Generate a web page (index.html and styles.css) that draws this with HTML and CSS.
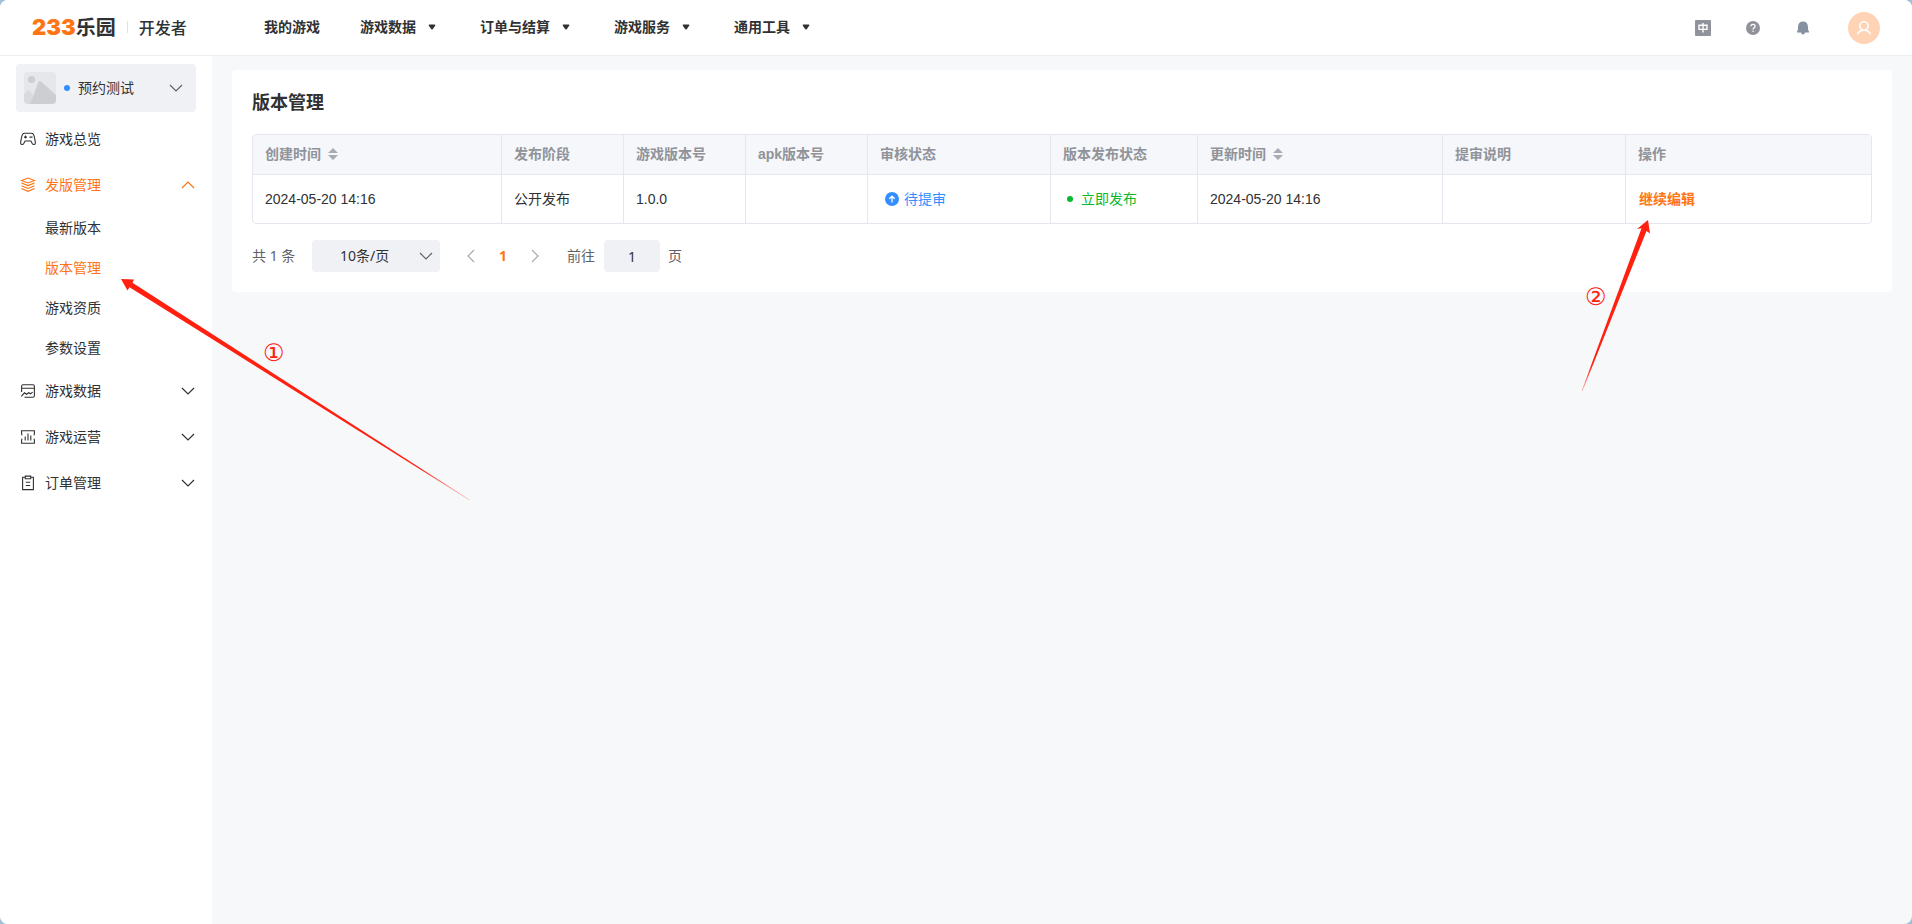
FILE: index.html
```html
<!DOCTYPE html>
<html lang="zh-CN">
<head>
<meta charset="utf-8">
<meta name="viewport" content="width=device-width, initial-scale=1">
<title>版本管理 - 233乐园开发者</title>
<link rel="stylesheet" href="styles.css">
</head>
<body>
<svg class="defs" width="0" height="0" aria-hidden="true">
  <symbol id="chevron-down" viewBox="0 0 14 14"><path d="M1 4l6 6 6-6" fill="none" stroke="currentColor" stroke-width="1.2"/></symbol>
  <symbol id="caret" viewBox="0 0 8 6"><path d="M1.6 0.6h4.8q1.4 0 .8 1.2L4.8 5q-.8 1-1.6 0L.8 1.8Q.2.6 1.6.6z" fill="currentColor"/></symbol>
  <symbol id="sort" viewBox="0 0 10 12"><path d="M5 0l5 5H0zM0 7h10l-5 5z" fill="currentColor"/></symbol>
</svg>
<div class="app">
  <header class="topbar">
    <a class="brand" href="#">
      <span class="brand-num">233</span><span class="brand-name">乐园</span>
      <span class="brand-line"></span>
      <span class="brand-sub">开发者</span>
    </a>
    <nav class="topnav">
      <a class="nav-item" href="#">我的游戏</a>
      <button class="nav-item" type="button">游戏数据<svg class="caret"><use href="#caret"/></svg></button>
      <button class="nav-item" type="button">订单与结算<svg class="caret"><use href="#caret"/></svg></button>
      <button class="nav-item" type="button">游戏服务<svg class="caret"><use href="#caret"/></svg></button>
      <button class="nav-item" type="button">通用工具<svg class="caret"><use href="#caret"/></svg></button>
    </nav>
    <div class="tools">
      <button class="tool" type="button" aria-label="语言">
        <svg width="16" height="16" viewBox="0 0 16 16"><rect width="16" height="16" rx="1" fill="#909399"/><path d="M4 5.2h8v4.2H4zM8 3v9.6" fill="none" stroke="#fff" stroke-width="1.4"/></svg>
      </button>
      <button class="tool" type="button" aria-label="帮助">
        <svg width="16" height="16" viewBox="0 0 16 16"><circle cx="8" cy="8" r="7" fill="#909399"/><path d="M5.9 6.3c0-2.7 4.2-2.6 4.2-.1 0 1.5-2 1.6-2 3.2" fill="none" stroke="#fff" stroke-width="1.3"/><circle cx="8.1" cy="11.3" r=".8" fill="#fff"/></svg>
      </button>
      <button class="tool" type="button" aria-label="通知">
        <svg width="16" height="16" viewBox="0 0 16 16"><path d="M8 1.6c3 0 4.7 2 4.9 4.6l.3 4 .8 1.2v1H10c-.2 1.3-1 2-2 2s-1.800-.7-2-2H2v-1l.8-1.200.3-4C3.300 3.600 5 1.600 8 1.600z" fill="#8590a0"/></svg>
      </button>
      <button class="avatar" type="button" aria-label="账户">
        <svg width="16" height="16" viewBox="0 0 16 16" fill="none" stroke="#fff" stroke-width="1.500"><circle cx="8" cy="6" r="4.200"/><path d="M1.700 14.300C2.600 11.600 5 10.200 8 10.200s5.400 1.400 6.300 4.100"/></svg>
      </button>
    </div>
  </header>

  <div class="body">
    <aside class="sidebar">
      <button class="game" type="button">
        <svg class="thumb" viewBox="0 0 32 32"><rect width="32" height="32" rx="4" fill="#e6e7eb"/><circle cx="7.500" cy="7.500" r="3.600" fill="#cdced2"/><path d="M0 23l3-4q1.500-2 3 0l3 4-2.500 9H4q-4 0-4-4z" fill="#d9dade"/><path d="M6 32l8.300-21.500q1-2.500 3-.8L32 23v5q0 4-4 4z" fill="#cdced2"/></svg>
        <span class="dot dot-blue"></span>
        <span class="game-name">预约测试</span>
        <svg class="chev"><use href="#chevron-down"/></svg>
      </button>
      <nav class="menu">
        <a class="menu-item" href="#">
          <svg class="mi" viewBox="0 0 16 16"><path d="M4.600 2.200h6.800c2 0 2.600 1.600 3 4l.9 4.600c.5 3-2 3.500-3.200 1.500L10.900 10H5.100l-1.200 2.300C2.700 14.300.2 13.800.7 10.800l.9-4.600c.4-2.400 1-4 3-4zM5.500 4.600v3M4 6.100h3M9.500 6.100h3"/></svg>
          <span>游戏总览</span>
        </a>
        <button class="menu-item active" type="button" aria-expanded="true">
          <svg class="mi" viewBox="0 0 16 16"><path d="M8 1l6.500 2.500L8 6 1.500 3.500zM1.500 6L8 8.600 14.500 6M1.500 8.800L8 11.400l6.500-2.600M1.500 11.600L8 14.300l6.500-2.700"/></svg>
          <span>发版管理</span>
          <svg class="chev up"><use href="#chevron-down"/></svg>
        </button>
        <a class="sub-item" href="#">最新版本</a>
        <a class="sub-item active" href="#" aria-current="page">版本管理</a>
        <a class="sub-item" href="#">游戏资质</a>
        <a class="sub-item" href="#">参数设置</a>
        <button class="menu-item" type="button">
          <svg class="mi" viewBox="0 0 16 16"><path d="M1.600 9V3.200q0-1.500 1.500-1.500h9.800q1.500 0 1.500 1.500v9.600q0 1.500-1.500 1.500H4.500M1.600 5.300h12.800M1.300 13.300L4.500 9.800l2 1.500 2.300-1.600 1.700 1.100 2.200-1.700"/></svg>
          <span>游戏数据</span>
          <svg class="chev"><use href="#chevron-down"/></svg>
        </button>
        <button class="menu-item" type="button">
          <svg class="mi" viewBox="0 0 16 16"><path d="M1.600 5V1.700h12.800V5M1.600 11v3.300h12.800V11M1 5.700h1.500M13.500 5.700H15M1 10.300h1.500M13.500 10.300H15M5.200 7.500v4M8 4.500v7M10.800 6.500v5"/></svg>
          <span>游戏运营</span>
          <svg class="chev"><use href="#chevron-down"/></svg>
        </button>
        <button class="menu-item" type="button">
          <svg class="mi" viewBox="0 0 16 16"><path d="M5.300 2.300H2.600v12.300h10.800V2.300h-2.700M5.300 1.100h5.400v2.600H5.300zM5.800 7.200h4.400M5.800 10.500h4.400"/></svg>
          <span>订单管理</span>
          <svg class="chev"><use href="#chevron-down"/></svg>
        </button>
      </nav>
    </aside>

    <main class="content">
      <section class="card">
        <h1 class="title">版本管理</h1>
        <div class="table-wrap">
          <table class="table">
            <colgroup>
              <col class="w-time-first"><col class="w-short"><col class="w-short"><col class="w-short"><col class="w-mid"><col class="w-release"><col class="w-time"><col class="w-mid"><col class="w-time">
            </colgroup>
            <thead>
              <tr>
                <th scope="col"><span class="sortable">创建时间<svg class="sort"><use href="#sort"/></svg></span></th>
                <th scope="col">发布阶段</th>
                <th scope="col">游戏版本号</th>
                <th scope="col">apk版本号</th>
                <th scope="col">审核状态</th>
                <th scope="col">版本发布状态</th>
                <th scope="col"><span class="sortable">更新时间<svg class="sort"><use href="#sort"/></svg></span></th>
                <th scope="col">提审说明</th>
                <th scope="col">操作</th>
              </tr>
            </thead>
            <tbody>
              <tr>
                <td>2024-05-20 14:16</td>
                <td>公开发布</td>
                <td>1.0.0</td>
                <td></td>
                <td><span class="status pending"><svg width="14" height="14" viewBox="0 0 14 14"><circle cx="7" cy="7" r="7" fill="currentColor"/><path d="M7 10.500V4.500M4.300 6.800L7 4.200l2.700 2.600" fill="none" stroke="#fff" stroke-width="1.300"/></svg>待提审</span></td>
                <td><span class="status live"><span class="dot dot-green"></span>立即发布</span></td>
                <td>2024-05-20 14:16</td>
                <td></td>
                <td><a class="edit" href="#">继续编辑</a></td>
              </tr>
            </tbody>
          </table>
        </div>
        <div class="pager">
          <span class="total">共 1 条</span>
          <span class="size">
            <select aria-label="每页条数"><option>10条/页</option><option>20条/页</option></select>
            <svg class="chev"><use href="#chevron-down"/></svg>
          </span>
          <button class="page-btn prev" type="button" aria-label="上一页"><svg class="chev left"><use href="#chevron-down"/></svg></button>
          <button class="page-btn current" type="button">1</button>
          <button class="page-btn next" type="button" aria-label="下一页"><svg class="chev right"><use href="#chevron-down"/></svg></button>
          <label class="jump">前往<input type="text" value="1"><span>页</span></label>
        </div>
      </section>
    </main>
  </div>

  <div class="note note-1">
    <svg width="360" height="230" viewBox="0 0 360 230">
      <defs><linearGradient id="fade1" gradientUnits="userSpaceOnUse" x1="1" y1="5" x2="350" y2="227"><stop offset=".85" stop-color="#ff2010"/><stop offset="1" stop-color="#ff2010" stop-opacity=".3"/></linearGradient></defs>
      <path d="M1 5L14 5.500 12.500 8.800 350 226 349 226 9.500 13.300 7.500 16.500z" fill="url(#fade1)"/>
    </svg>
    <span class="num">①</span>
  </div>
  <div class="note note-2">
    <svg width="80" height="180" viewBox="0 0 80 180">
      <defs><linearGradient id="fade2" gradientUnits="userSpaceOnUse" x1="68" y1="0" x2="2" y2="171"><stop offset=".85" stop-color="#ff2010"/><stop offset="1" stop-color="#ff2010" stop-opacity=".3"/></linearGradient></defs>
      <path d="M68 0L70 13.500 66.500 11 2.500 171 1.600 171 61.500 8.300 57 9z" fill="url(#fade2)"/>
    </svg>
    <span class="num">②</span>
  </div>
</div>
</body>
</html>
```

FILE: styles.css
```css
* { box-sizing: border-box; }

html { background: #9fc0d6; }

body {
  margin: 0;
  color: #303133;
  font: 14px/20px "Liberation Sans", "Noto Sans CJK SC", sans-serif;
}

a { color: inherit; text-decoration: none; }

button {
  margin: 0;
  padding: 0;
  border: 0;
  background: none;
  color: inherit;
  font: inherit;
  cursor: pointer;
}

svg { display: block; flex: none; }
.defs { position: absolute; }

.app {
  position: relative;
  display: flex;
  flex-direction: column;
  min-height: 100vh;
  border-radius: 8px;
  background: #f7f8fa;
  overflow: hidden;
}

/* top bar */
.topbar {
  display: flex;
  align-items: center;
  height: 56px;
  padding: 0 32px;
  border-bottom: 1px solid #ebedf0;
  background: #fff;
}

.brand {
  display: flex;
  align-items: center;
  width: 232px;
  padding-bottom: 2px;
  line-height: 24px;
}
.brand-num {
  color: #ff7414;
  font-family: Inter, sans-serif;
  font-size: 22px;
  font-weight: 900;
}
.brand-name {
  font-family: "Noto Sans CJK SC", sans-serif;
  font-size: 20px;
  font-weight: 700;
}
.brand-line {
  width: 1px;
  height: 12px;
  margin: 0 11px;
  background: #dfe1e6;
}
.brand-sub {
  font-family: "Noto Sans CJK SC", sans-serif;
  font-size: 16px;
  font-weight: 500;
}

.topnav { display: flex; gap: 40px; padding-bottom: 2px; }
.nav-item { display: flex; align-items: center; font-weight: 600; }
.caret { width: 8px; height: 6px; margin: 0 4px 0 12px; }

.tools { display: flex; align-items: center; margin-left: auto; }
.tool { width: 16px; height: 16px; margin-right: 34px; }
.avatar {
  display: grid;
  place-items: center;
  width: 32px;
  height: 32px;
  margin-left: 3px;
  border-radius: 50%;
  background: #ffd3b5;
}

/* sidebar */
.body { display: flex; flex: 1; }
.sidebar {
  flex: none;
  width: 212px;
  padding: 8px 16px;
  background: #fff;
}
.game {
  display: flex;
  align-items: center;
  width: 100%;
  height: 48px;
  padding: 0 13px 0 8px;
  border-radius: 4px;
  background: #f0f1f5;
}
.game .chev { color: #606266; }
.thumb { width: 32px; height: 32px; }
.dot { flex: none; width: 6px; height: 6px; border-radius: 50%; background: currentColor; }
.dot-blue { margin: 0 8px; color: #338fff; }
.chev { width: 14px; height: 14px; margin-left: auto; }
.up { transform: rotate(180deg); }
.left { transform: rotate(90deg); }
.right { transform: rotate(-90deg); }

.menu { display: flex; flex-direction: column; margin-top: 4px; }
.menu-item {
  display: flex;
  align-items: center;
  gap: 9px;
  height: 46px;
  padding: 0 1px 0 4px;
}
.mi { width: 16px; height: 16px; fill: none; stroke: currentColor; stroke-width: 1.1; }
.sub-item { padding: 10px 0 10px 29px; }
.active { color: #ff7414; }

/* content */
.content { flex: 1; min-width: 0; padding: 14px 20px; }
.card { padding: 20px; border-radius: 4px; background: #fff; }
.title { margin: 0 0 18px; font-size: 18px; line-height: 26px; font-weight: 700; }

.table-wrap { border: 1px solid #e4e7ed; border-radius: 4px; overflow: hidden; }
.table { width: 100%; table-layout: fixed; border-spacing: 0; }
.w-time-first { width: 249px; }
.w-short { width: 122px; }
.w-mid { width: 183px; }
.w-release { width: 147px; }
.w-time { width: 245px; }
.table th, .table td {
  padding: 0 12px;
  border-right: 1px solid #e4e7ed;
  text-align: left;
}
.table th:last-child, .table td:last-child { border-right: 0; }
.table th {
  height: 40px;
  padding-bottom: 2px;
  border-bottom: 1px solid #e4e7ed;
  background: #f5f7fa;
  color: #909399;
}
.table td { height: 48px; }
.sortable { display: flex; align-items: center; gap: 7px; }
.sort { width: 10px; height: 12px; color: #a8abb2; }
.status { display: flex; align-items: center; padding-left: 4px; }
.pending { gap: 5px; padding-left: 5px; color: #338fff; }
.live { gap: 8px; color: #0ab82f; }
.edit { padding-left: 1px; color: #ff7414; font-weight: 700; }

/* pagination */
.pager {
  display: flex;
  align-items: center;
  height: 32px;
  margin-top: 16px;
  color: #606266;
  font-family: "Noto Sans", "Noto Sans CJK SC", sans-serif;
}
.total { width: 60px; }
.size { position: relative; width: 128px; height: 32px; }
.size select {
  width: 100%;
  height: 100%;
  padding: 0 28px;
  border: 0;
  border-radius: 4px;
  background: #f0f1f5;
  color: #303133;
  font: inherit;
  appearance: none;
}
.size .chev { position: absolute; top: 9px; right: 7px; pointer-events: none; }
.page-btn { display: grid; place-items: center; width: 32px; height: 32px; }
.page-btn .chev { margin: 0; color: #a8abb2; }
.prev { margin-left: 15px; }
.current { color: #ff7414; font-weight: 700; }
.jump { display: flex; align-items: center; margin-left: 16px; }
.jump input {
  width: 56px;
  height: 32px;
  margin: 0 8px 0 9px;
  border: 0;
  border-radius: 4px;
  background: #f0f1f5;
  color: #303133;
  font: inherit;
  text-align: center;
}

/* step markers laid over the page */
.note { position: absolute; color: #ff2010; pointer-events: none; }
.note-1 { left: 120px; top: 274px; }
.note-2 { right: 252px; top: 220px; }
.num {
  position: absolute;
  font: 24px/24px "DejaVu Sans", sans-serif;
}
.note-1 .num { left: 143px; top: 67px; }
.note-2 .num { left: 5px; top: 65px; }
```
